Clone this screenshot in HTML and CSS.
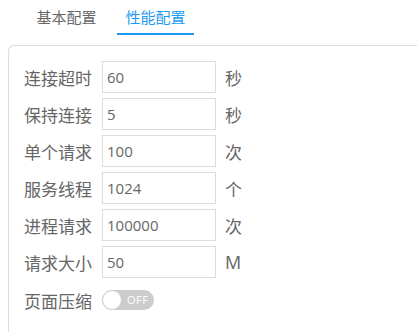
FILE: index.html
```html
<!DOCTYPE html>
<html lang="zh-CN">
<head>
  <meta charset="UTF-8">
  <title>性能配置</title>
  <link rel="stylesheet" href="styles.css">
</head>
<body>
  <div class="tabs">
    <div class="tabs__item">基本配置</div>
    <div class="tabs__item tabs__item--active">性能配置</div>
  </div>
  <div class="panel">
    <div class="field">
      <label class="field__label">连接超时</label>
      <input class="field__input" type="text" value="60">
      <span class="field__unit">秒</span>
    </div>
    <div class="field">
      <label class="field__label">保持连接</label>
      <input class="field__input" type="text" value="5">
      <span class="field__unit">秒</span>
    </div>
    <div class="field">
      <label class="field__label">单个请求</label>
      <input class="field__input" type="text" value="100">
      <span class="field__unit">次</span>
    </div>
    <div class="field">
      <label class="field__label">服务线程</label>
      <input class="field__input" type="text" value="1024">
      <span class="field__unit">个</span>
    </div>
    <div class="field">
      <label class="field__label">进程请求</label>
      <input class="field__input" type="text" value="100000">
      <span class="field__unit">次</span>
    </div>
    <div class="field">
      <label class="field__label">请求大小</label>
      <input class="field__input" type="text" value="50">
      <span class="field__unit field__unit--latin">M</span>
    </div>
    <div class="field field--switch">
      <label class="field__label">页面压缩</label>
      <div class="switch">
        <span class="switch__knob"></span>
        <span class="switch__text">OFF</span>
      </div>
    </div>
  </div>
</body>
</html>
```

FILE: styles.css
```css
html {
  box-sizing: border-box;
  background: #fff;
}

*, *:before, *:after {
  box-sizing: inherit;
}

body {
  margin: 0;
  height: 100vh;
  overflow: hidden;
  display: flex;
  flex-direction: column;
  font-family: 'Open Sans', 'Noto Sans CJK SC', sans-serif;
  color: #666;
}

.tabs {
  display: flex;
  gap: 12px;
  padding: 0 0 0 28px;
  height: 35px;
  flex: none;
}

.tabs__item {
  padding: 6px 0 0;
  width: 77px;
  text-align: center;
  font-size: 15px;
  line-height: 22px;
  color: #666;
  border-bottom: 2px solid transparent;
}

.tabs__item--active {
  color: #1e9bf0;
  border-bottom-color: #1e9bf0;
}

.panel {
  flex: 1;
  margin: 10px 0 0 8px;
  border: 1px solid #ddd;
  border-right: 0;
  border-bottom: 0;
  border-top-left-radius: 6px;
  padding: 15px 0 0 15px;
  display: flex;
  flex-direction: column;
  gap: 5px;
}

.field {
  display: flex;
  align-items: center;
  height: 32px;
}

.field--switch {
  height: 20px;
  margin-top: 7px;
}

.field__label {
  width: 78px;
  font-size: 17px;
  color: #666;
}

.field__input {
  width: 114px;
  height: 32px;
  border: 1px solid #ddd;
  padding: 0 4px;
  font-family: 'Open Sans', 'Noto Sans CJK SC', sans-serif;
  font-size: 15px;
  color: #666;
  outline: 0;
}

.field__unit {
  margin-left: 9px;
  font-size: 17px;
  color: #666;
}

.field__unit--latin {
  font-size: 18px;
}

.switch {
  position: relative;
  width: 52px;
  height: 20px;
  border-radius: 10px;
  background: #ccc;
}

.switch__knob {
  position: absolute;
  left: 0;
  top: 0;
  width: 20px;
  height: 20px;
  border-radius: 50%;
  background: #fff;
  border: 1px solid #ccc;
}

.switch__text {
  position: absolute;
  left: 25px;
  top: 0;
  font-size: 11px;
  line-height: 20px;
  color: #fff;
  letter-spacing: 0.5px;
}
```
